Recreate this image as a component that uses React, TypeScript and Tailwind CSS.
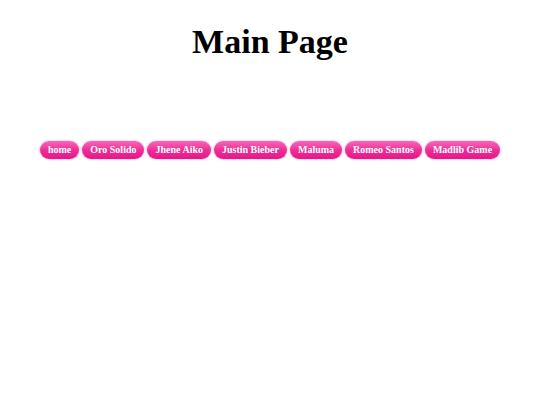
const links = ['home', 'Oro Solido', 'Jhene Aiko', 'Justin Bieber', 'Maluma', 'Romeo Santos', 'Madlib Game']

export default function App() {
  return (
    <div className="min-h-screen bg-white text-black" style={{ fontFamily: '"Liberation Serif", "Times New Roman", serif' }}>
      <h1 className="pt-[22px] text-center text-[34px] font-bold leading-[40px]">Main Page</h1>
      <nav className="mt-[79px] flex justify-center gap-[3px]">
        {links.map((l) => (
          <a
            key={l}
            href="#"
            className="h-[18px] rounded-full bg-gradient-to-b from-[#f665ba] via-[#ee2c95] to-[#e6178a] px-[8px] text-[10px] font-bold leading-[18px] text-white shadow-[0_0_2px_rgba(230,30,140,0.6)]"
          >
            {l}
          </a>
        ))}
      </nav>
    </div>
  )
}
